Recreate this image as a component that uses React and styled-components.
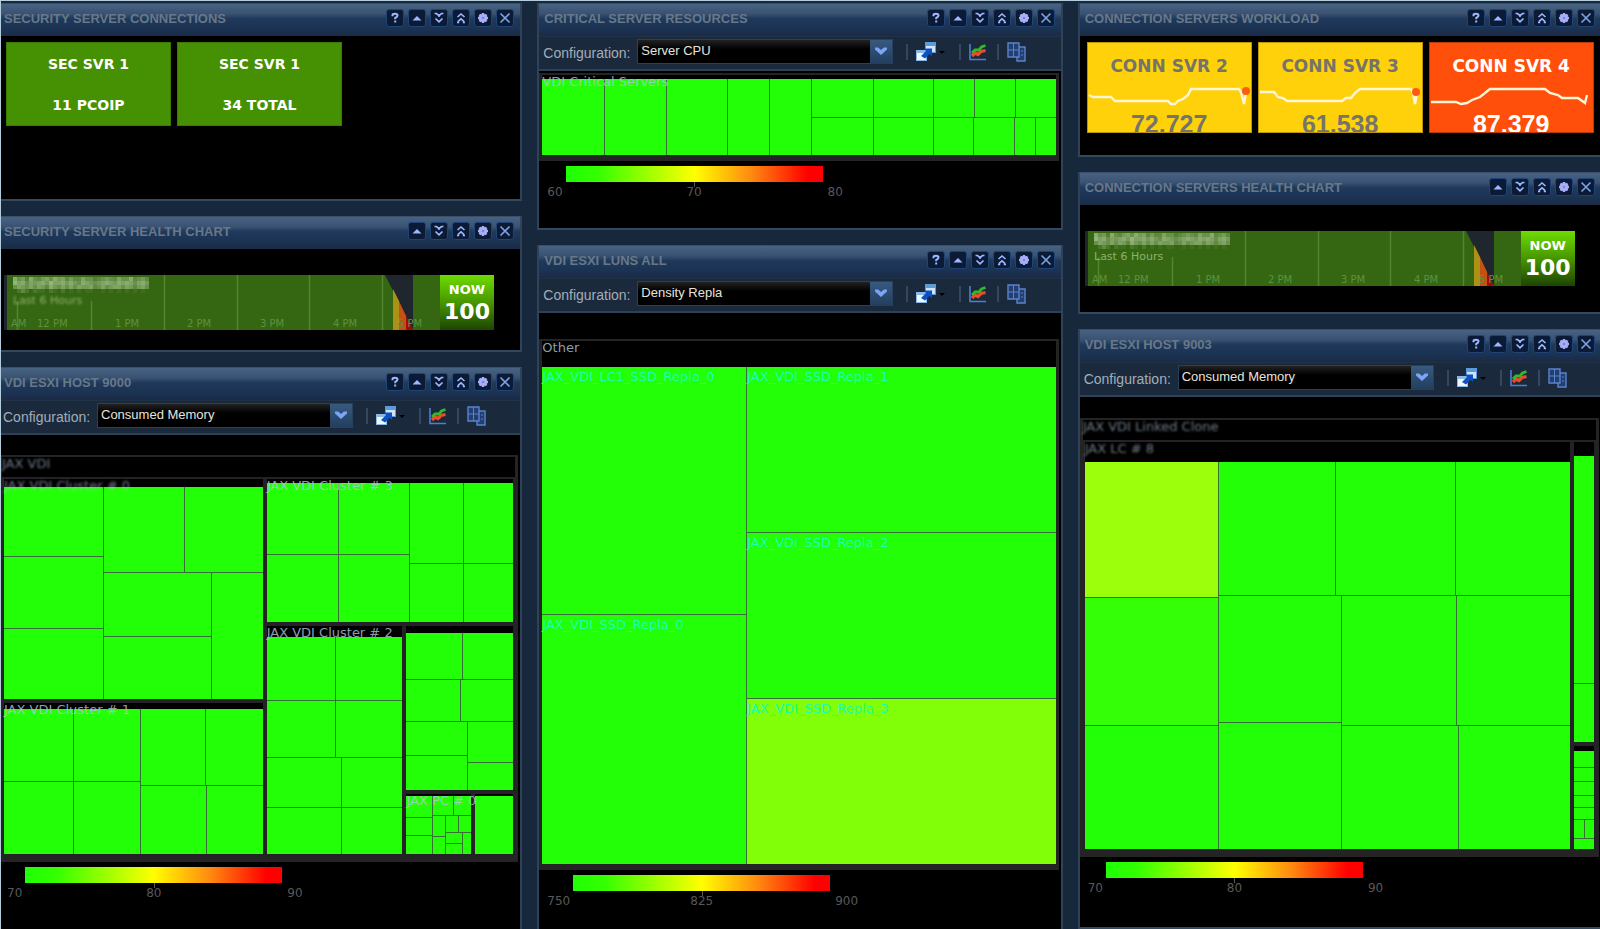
import { useId } from 'react'
import styled, { createGlobalStyle } from 'styled-components'

const GREEN = '#22ff06'

const GlobalStyle = createGlobalStyle`
  *{
    box-sizing: border-box;
  }
  body{
    margin: 0;
    background-color: #17283c;
    font-family: "Liberation Sans", Arial, sans-serif;
  }
`
const Page = styled.main`
  min-height: 100vh;
  overflow: hidden;
  display: flex;
  border-top: 1px solid #b4cddd;
  border-left: 1px solid #b4cddd;
  background-color: #17283c;
`
const Columns = styled.div`
  flex: 1;
  display: grid;
  grid-template-columns: repeat(3, minmax(0, 1fr));
  gap: 15px;
  margin: 2px -3px 0 -4px;
`
const Column = styled.div`
  display: flex;
  flex-direction: column;
  gap: 15px;
`
const PanelBox = styled.section`
  display: flex;
  flex-direction: column;
  flex: ${(props) => props.$fill ? '1 0 auto' : '0 0 auto'};
  border: 2px solid #2f4358;
  border-top: 1px solid #3b4f66;
  border-bottom: ${(props) => props.$open ? '0' : '2px solid #34495e'};
  background-color: #000;
`
const PanelHeader = styled.header`
  display: flex;
  align-items: center;
  justify-content: space-between;
  height: 32px;
  padding: 0 6px 4px 5px;
  background: linear-gradient(#486283 0%, #3a5373 30%, #1f395b 46%, #1c3353 75%, #1a2b45 100%);
`
const PanelTitle = styled.h2`
  margin: 0;
  font-size: 13px;
  font-weight: bold;
  color: #687888;
  white-space: nowrap;
`
const HeaderButtons = styled.div`
  display: flex;
  gap: 4px;
`
const HeaderButton = styled.button`
  display: flex;
  align-items: center;
  justify-content: center;
  width: 18px;
  height: 18px;
  padding: 0;
  border: 1px solid #1e4478;
  border-radius: 3px;
  background-color: #0b1a35;
  color: #9db8ff;
`
const Toolbar = styled.div`
  display: flex;
  align-items: center;
  height: 35px;
  padding: 0 4px 3px;
  border-top: 1px solid #203246;
  border-bottom: 2px solid #2e4256;
  background-color: #1a2a3c;
`
const ConfigLabel = styled.label`
  width: 94px;
  padding-top: 3px;
  font-size: 14px;
  color: #a3adb8;
`
const SelectWrapper = styled.div`
  position: relative;
  flex: 0 1 256px;
  margin-bottom: 1px;
`
const Select = styled.select`
  appearance: none;
  display: block;
  width: 100%;
  height: 25px;
  padding: 0 24px 1px 3px;
  border: 1px solid #24415f;
  border-radius: 0;
  background: linear-gradient(#222 0, #000 40%);
  color: #e8e4dc;
  font-family: inherit;
  font-size: 13px;
`
const SelectArrow = styled.span`
  position: absolute;
  top: 1px;
  right: 1px;
  bottom: 1px;
  width: 22px;
  display: flex;
  align-items: center;
  justify-content: center;
  background: linear-gradient(#38597f, #233f60);
  pointer-events: none;
`
const Separator = styled.span`
  width: 2px;
  height: 16px;
  margin: 0 8px 0 ${(props) => props.$wide ? 13 : 10}px;
  background-color: #33485e;
`
const ToolButton = styled.button`
  display: flex;
  align-items: center;
  padding: 0;
  border: 0;
  background: none;
`
const TileArea = styled.div`
  display: flex;
  gap: 6px;
  min-height: ${(props) => props.$height}px;
  padding: 6px 7px;
  align-items: flex-start;
`
const Tile = styled.div`
  width: 165px;
  height: 84px;
  display: flex;
  flex-direction: column;
  align-items: center;
  justify-content: space-around;
  border: 1px solid #3b7a03;
  background-color: #459003;
  color: #fff;
  font: bold 14px "DejaVu Sans", Verdana, sans-serif;
`
const WorkTile = styled.div`
  width: 165px;
  height: 91px;
  overflow: hidden;
  display: flex;
  flex-direction: column;
  align-items: center;
  background-color: ${(props) => props.$alert ? '#ff4f0a' : '#ffd10a'};
  border: 1px solid ${(props) => props.$alert ? '#b83a08' : '#b89708'};
  color: ${(props) => props.$alert ? '#fff' : '#75746a'};
`
const WorkName = styled.div`
  padding-top: 12px;
  font: bold 17px/22px "DejaVu Sans", Verdana, sans-serif;
`
const WorkValue = styled.div`
  font-size: 25px;
  font-weight: bold;
  line-height: 22px;
`
const Spark = styled.svg`
  flex: none;
  display: block;
`
const HealthArea = styled.div`
  display: flex;
  min-height: ${(props) => props.$height}px;
  padding: 26px 5px 18px;
`
const HealthSvg = styled.svg`
  display: block;
  flex: none;
`
const Now = styled.div`
  width: 54px;
  height: 55px;
  display: flex;
  flex-direction: column;
  align-items: center;
  justify-content: center;
  background: linear-gradient(#6edb00, #4c9d00 45%, #1d4500);
  color: #fff;
  font-family: "DejaVu Sans", Verdana, sans-serif;
  font-weight: bold;
`
const NowLabel = styled.span`
  font-size: 13px;
  line-height: 18px;
`
const NowValue = styled.span`
  font-size: 22px;
  line-height: 26px;
`
const MapArea = styled.div`
  flex: 1 0 ${(props) => props.$height}px;
  display: flex;
  padding: ${(props) => props.$top}px 2px 0 0;
`
const MapFrame = styled.div`
  flex: 1;
  display: flex;
  flex-direction: column;
  border: solid #242424;
  border-width: 2px 3px 6px;
  min-width: 0;
`
const Group = styled.div`
  flex: ${(props) => props.$size} 1 0;
  display: flex;
  flex-direction: column;
  min-width: 0;
  min-height: 0;
  border: 2px solid #242226;
`
const GroupHead = styled.div`
  position: relative;
  z-index: 1;
  flex: none;
  height: ${(props) => props.$height}px;
  font: 13px/14px "DejaVu Sans", Verdana, sans-serif;
  color: rgba(178, 200, 218, ${(props) => props.$blurred ? 0.6 : 0.8});
  white-space: nowrap;
  filter: ${(props) => props.$blurred ? 'blur(1px)' : 'none'};
`
const Split = styled.div`
  flex: ${(props) => props.$size} 1 0;
  display: flex;
  flex-direction: ${(props) => props.$dir};
  gap: ${(props) => props.$plain ? 0 : 1}px;
  min-width: 0;
  min-height: 0;
  background-color: ${(props) => props.$plain ? '#000' : '#397039'};
`
const Cell = styled.div`
  flex: ${(props) => props.$size} 1 0;
  min-width: 0;
  min-height: 0;
  background-color: ${(props) => props.$color || GREEN};
  color: #1affb4;
  font: 13px/20px "DejaVu Sans", Verdana, sans-serif;
  white-space: nowrap;
`
const ScaleArea = styled.div`
  display: grid;
  grid-template-columns: auto 257px auto;
  grid-template-rows: 16px 18px;
  justify-content: start;
  min-height: ${(props) => props.$height}px;
  padding: 5px 0 0 8px;
  font: 12px/20px "DejaVu Sans", Verdana, sans-serif;
  color: #585858;
`
const ScaleBar = styled.div`
  grid-area: 1 / 2;
  background: linear-gradient(to right, #1fff06, #3f0 12%, #ff0 50%, #ff8a10 72%, #f00 94%);
`
const ScaleLow = styled.span`
  grid-area: 2 / 1;
  margin-right: 3px;
`
const ScaleMid = styled.span`
  grid-area: 2 / 2;
  justify-self: center;
  position: relative;
  &::before{
    content: '';
    position: absolute;
    left: 50%;
    top: 0;
    width: 1px;
    height: 5px;
    background-color: #585858;
  }
`
const ScaleHigh = styled.span`
  grid-area: 2 / 3;
  margin-left: 5px;
`

const glyphs = {
  help: (
    <path d="M3.5 4.2V3.2Q3.5 1.8 6 1.8T8.5 3.6Q8.5 4.8 6.2 6V7.2M6.2 8.6V10.6" fill="none" stroke="currentColor" strokeWidth="2" />
  ),
  up: <path d="M1.5 8.5H10.5L6 4Z" fill="currentColor" />,
  down2: (
    <path d="M1.5 1.5H3.5L6 3.6L8.5 1.5H10.5M2.5 6.5L6 9.8L9.5 6.5M6 3.6V5" fill="none" stroke="currentColor" strokeWidth="1.7" />
  ),
  up2: (
    <path d="M2.5 5L6 2L9.5 5M2 10.5H3.4V9.2L6 6.8L8.6 9.2V10.5H10" fill="none" stroke="currentColor" strokeWidth="1.6" />
  ),
  gear: (
    <>
      <path d="M6 1V11M1 6H11M2.5 2.5L9.5 9.5M9.5 2.5L2.5 9.5" stroke="#a9b0f8" strokeWidth="2.4" />
      <circle cx="6" cy="6" r="4.1" fill="#a9b0f8" />
      <circle cx="6" cy="6" r="1.3" fill="#7288d8" />
    </>
  ),
  close: <path d="M1.5 1.5L10.5 10.5M10.5 1.5L1.5 10.5" stroke="#7da0e0" strokeWidth="1.7" />,
}

const buttonNames = {
  help: 'Help',
  up: 'Collapse',
  down2: 'Move down',
  up2: 'Move up',
  gear: 'Edit widget',
  close: 'Close',
}

function Panel({ title, help, fill, open, children }) {
  const names = Object.keys(glyphs).filter((name) => help || name !== 'help')
  return (
    <PanelBox $fill={fill} $open={open}>
      <PanelHeader>
        <PanelTitle>{title}</PanelTitle>
        <HeaderButtons>
          {names.map((name) => (
            <HeaderButton key={name} type="button" aria-label={buttonNames[name]}>
              <svg width="12" height="12" viewBox="0 0 12 12">{glyphs[name]}</svg>
            </HeaderButton>
          ))}
        </HeaderButtons>
      </PanelHeader>
      {children}
    </PanelBox>
  )
}

function ConfigBar({ value }) {
  const id = useId()
  return (
    <Toolbar>
      <ConfigLabel htmlFor={id}>Configuration:</ConfigLabel>
      <SelectWrapper>
        <Select id={id} defaultValue={value}>
          <option>{value}</option>
        </Select>
        <SelectArrow>
          <svg width="12" height="10" viewBox="0 0 12 10">
            <path d="M0 1.5H3.2L6 4L8.8 1.5H12V3.5L6 9L0 3.5Z" fill="#7ba5f5" />
          </svg>
        </SelectArrow>
      </SelectWrapper>
      <Separator $wide />
      <ToolButton type="button" aria-label="Open view">
        <svg width="30" height="20" viewBox="0 0 30 20">
          <path d="M9 0H20V11H9Z" fill="#5d9ad8" />
          <path d="M10 4H19V10H10Z" fill="#cfe4f8" />
          <path d="M0 8H11V19H0Z" fill="#8ab8e4" />
          <path d="M1 11H10V18H1Z" fill="#eef7ff" />
          <path d="M5 14L10 9L8 6.5H16V14L13.5 12L9 16.5Z" fill="#0c50c4" />
          <path d="M23 9H29L26 12Z" fill="#000" />
        </svg>
      </ToolButton>
      <Separator $wide />
      <ToolButton type="button" aria-label="Show chart">
        <svg width="18" height="18" viewBox="0 0 18 18">
          <path d="M1 1V16.5H17" fill="none" stroke="#4d7fd0" strokeWidth="1.6" />
          <path d="M3 13L6 10L9 11.5L12 8.5L16.5 7.5" fill="none" stroke="#f04a28" strokeWidth="3.2" />
          <path d="M3 10L6 7L10 7L12.5 4L16.5 2.5" fill="none" stroke="#33b82c" strokeWidth="2.8" />
        </svg>
      </ToolButton>
      <Separator />
      <ToolButton type="button" aria-label="Compare">
        <svg width="20" height="20" viewBox="0 0 20 20">
          <g fill="#223f70" stroke="#5b83cc" strokeWidth="1.4">
            <path d="M10 5H18V19H10Z" />
            <path d="M1 1H12V15H1Z" />
            <path d="M1 8H12M6.5 1V15M14 9H16M14 13H16" fill="none" strokeWidth="1" />
          </g>
        </svg>
      </ToolButton>
    </Toolbar>
  )
}

function Scale({ low, mid, high, height }) {
  return (
    <ScaleArea $height={height}>
      <ScaleBar />
      <ScaleLow>{low}</ScaleLow>
      <ScaleMid>{mid}</ScaleMid>
      <ScaleHigh>{high}</ScaleHigh>
    </ScaleArea>
  )
}

// A treemap is a tree of splits; a plain number is a green cell of that weight
const row = (size, ...kids) => ({ size, dir: 'row', kids })
const col = (size, ...kids) => ({ size, dir: 'column', kids })
const plain = (node) => ({ ...node, plain: true })
const group = (size, head, label, body, blurred) => ({ size, head, label, body, blurred })

function MapNode({ node }) {
  if (typeof node === 'number') return <Cell $size={node} />
  if (node.kids) {
    return (
      <Split $size={node.size} $dir={node.dir} $plain={node.plain}>
        {node.kids.map((kid, i) => <MapNode key={i} node={kid} />)}
      </Split>
    )
  }
  if (node.body) {
    return (
      <Group $size={node.size}>
        <GroupHead $height={node.head} $blurred={node.blurred}>{node.label}</GroupHead>
        <MapNode node={node.body} />
      </Group>
    )
  }
  return <Cell $size={node.size} $color={node.color}>{node.label}</Cell>
}

function Treemap({ top, height, head, label, blurred, root }) {
  return (
    <MapArea $top={top} $height={height}>
      <MapFrame>
        <GroupHead $height={head} $blurred={blurred}>{label}</GroupHead>
        <MapNode node={root} />
      </MapFrame>
    </MapArea>
  )
}

const criticalServers = row(1,
  180, 176, 176, 119, 119,
  col(708,
    row(38, 182, 176, 119, 119, 118),
    row(38, 182, 176, 119, 119, 58, 60),
  ),
)

const luns = row(1,
  col(203,
    { size: 248, label: 'JAX_VDI_LC1_SSD_Repla_0' },
    { size: 250, label: 'JAX_VDI_SSD_Repla_0' },
  ),
  col(307,
    { size: 166, label: 'JAX_VDI_SSD_Repla_1' },
    { size: 166, label: 'JAX_VDI_SSD_Repla_2' },
    { size: 166, label: 'JAX_VDI_SSD_Repla_3', color: '#80ff08' },
  ),
)

const host9000 = plain(row(1,
  plain(col(262,
    group(225, 8, 'JAX VDI Cluster # 0', row(1,
      col(98, 69, 71, 70),
      col(158,
        row(85, 80, 78),
        row(127, col(107, 64, 63), 51),
      ),
    ), true),
    group(154, 6, 'JAX VDI Cluster # 1', row(1,
      col(135, row(71, 69, 66), row(71, 69, 66)),
      col(121, row(75, 64, 57), row(67, 65, 56)),
    )),
  )),
  plain(col(250,
    group(145, 4, 'JAX VDI Cluster # 3', row(1,
      col(141, row(71, 71, 70), row(67, 71, 70)),
      col(103, row(80, 54, 49), row(58, 54, 49)),
    )),
    plain(row(234,
      group(137, 11, 'JAX VDI Cluster # 2', col(1,
        row(63, 67, 66),
        row(57, 67, 66),
        row(49, 73, 60),
        row(47, 73, 60),
      )),
      plain(col(112,
        group(167, 7, '', col(1,
          row(46, 56, 51),
          row(42, 54, 53),
          row(68, col(61, 34, 34), col(46, 41, 27)),
        )),
        plain(row(66,
          group(70, 2, 'JAX PC # 0', row(1,
            col(28, 22, 18, 18),
            col(40,
              row(20, 21, 19),
              row(38,
                col(13, 20, 18),
                col(27,
                  row(16, 13, 14),
                  row(22, col(18, 11, 11), 9),
                ),
              ),
            ),
          )),
          group(42, 2, '', row(1, 1)),
        )),
      )),
    )),
  )),
))

const host9003 = plain(row(1,
  group(488, 20, 'JAX LC # 8', row(1,
    col(133, { size: 135, color: '#9cff0c' }, { size: 128, color: '#35ff06' }, 123),
    col(351,
      row(133, 117, 119, 115),
      row(253,
        col(122, 126, 127),
        col(229, row(130, 115, 114), row(123, 117, 112)),
      ),
    ),
  ), true),
  plain(col(24,
    group(304, 14, '', col(1, 228, 58)),
    group(105, 5, '', col(1, 17, 14, 13, 12, 11, row(19, 1, 1), 10)),
  )),
))

const workload = [
  {
    name: 'CONN SVR 2',
    value: '72.727',
    points: '1,18 5,20 23,20 27,24 80,24 83,27 87,27 90,24 95,22 100,18 103,12 151,12 153,15 156,27 158,16',
    dot: [158, 14],
  },
  {
    name: 'CONN SVR 3',
    value: '61.538',
    points: '1,15 15,15 19,20 24,21 28,24 83,24 87,21 92,21 96,16 101,12 152,12 154,16 156,27 158,16',
    dot: [157, 15],
  },
  {
    name: 'CONN SVR 4',
    value: '87.379',
    alert: true,
    points: '1,25 26,25 31,27 37,26 42,23 50,20 60,12 115,12 120,16 128,18 132,21 148,21 155,26 157,18',
  },
]

const hours = [
  [33, '12 PM'],
  [111, '1 PM'],
  [183, '2 PM'],
  [256, '3 PM'],
  [329, '4 PM'],
  [394, '5 PM'],
]

// opacity steps of the masked host name, one digit per 4px block
const maskRows = [
  '8563854675867464475534565475584564',
  '9785767869778686587656787687875786',
  '5765757648657575766745756775764675',
  '0242021102102010101100101010101010',
]

function HealthChart({ maskedRange }) {
  return (
    <>
      <HealthSvg width="436" height="55" viewBox="0 0 436 55" role="img" aria-label="Health over the last 6 hours">
        <rect width="436" height="55" fill="#356612" />
        <rect width="3" height="55" fill="#20262e" />
        <path d="M13.5 26V55M87.5 26V55M160.5 0V55M233.5 0V55M305.5 0V55M378.5 0V55" stroke="#55852f" strokeWidth="1.5" />
        <path d="M381 0H409V55Z" fill="#20262e" />
        <path d="M389 14L395 26V55H389Z" fill="#ac9017" />
        <path d="M395 26L402 41V55H395Z" fill="#c45212" />
        <path d="M402 41L409 55H402Z" fill="#a8080c" />
        <g fontFamily="DejaVu Sans, Verdana, sans-serif" fontSize="10" fill="#5f9140">
          <text x="7" y="52">AM</text>
          {hours.map(([x, text]) => <text key={text} x={x} y="52">{text}</text>)}
        </g>
        {maskRows.map((line, y) => [...line].map((step, x) => (
          <rect key={x + '-' + y} x={9 + x * 4} y={2 + y * 4} width="4" height="4" fill="#b4cf9c" opacity={step / 12} />
        )))}
        <text
          x="9"
          y="29"
          fontFamily="DejaVu Sans, Verdana, sans-serif"
          fontSize="11"
          fill="#8db26e"
          style={maskedRange ? { filter: 'blur(1px)' } : undefined}
        >
          Last 6 Hours
        </text>
      </HealthSvg>
      <Now>
        <NowLabel>NOW</NowLabel>
        <NowValue>100</NowValue>
      </Now>
    </>
  )
}

function App() {
  return (
    <Page>
      <GlobalStyle />
      <Columns>
        <Column>
          <Panel title="SECURITY SERVER CONNECTIONS" help>
            <TileArea $height={163}>
              <Tile><span>SEC SVR 1</span><span>11 PCOIP</span></Tile>
              <Tile><span>SEC SVR 1</span><span>34 TOTAL</span></Tile>
            </TileArea>
          </Panel>
          <Panel title="SECURITY SERVER HEALTH CHART">
            <HealthArea $height={101}>
              <HealthChart maskedRange />
            </HealthArea>
          </Panel>
          <Panel title="VDI ESXI HOST 9000" help fill open>
            <ConfigBar value="Consumed Memory" />
            <Treemap top={20} height={360} head={20} label="JAX VDI" blurred root={host9000} />
            <Scale low="70" mid="80" high="90" height={67} />
          </Panel>
        </Column>

        <Column>
          <Panel title="CRITICAL SERVER RESOURCES" help>
            <ConfigBar value="Server CPU" />
            <Treemap top={2} height={90} head={4} label="VDI Critical Servers" root={criticalServers} />
            <Scale low="60" mid="70" high="80" height={67} />
          </Panel>
          <Panel title="VDI ESXI LUNS ALL" help fill open>
            <ConfigBar value="Density Repla" />
            <Treemap top={26} height={360} head={26} label="Other" root={luns} />
            <Scale low="750" mid="825" high="900" height={59} />
          </Panel>
        </Column>

        <Column>
          <Panel title="CONNECTION SERVERS WORKLOAD" help>
            <TileArea $height={119}>
              {workload.map((item) => (
                <WorkTile key={item.name} $alert={item.alert}>
                  <WorkName>{item.name}</WorkName>
                  <Spark width="163" height="36" viewBox="0 0 163 36">
                    <polyline points={item.points} fill="none" stroke="#fff6d8" strokeWidth="2.4" />
                    {item.dot && <circle cx={item.dot[0]} cy={item.dot[1]} r="4" fill="#ff5a10" />}
                  </Spark>
                  <WorkValue>{item.value}</WorkValue>
                </WorkTile>
              ))}
            </TileArea>
          </Panel>
          <Panel title="CONNECTION SERVERS HEALTH CHART">
            <HealthArea $height={107}>
              <HealthChart />
            </HealthArea>
          </Panel>
          <Panel title="VDI ESXI HOST 9003" help fill>
            <ConfigBar value="Consumed Memory" />
            <Treemap top={21} height={360} head={20} label="JAX VDI Linked Clone" blurred root={host9003} />
            <Scale low="70" mid="80" high="90" height={70} />
          </Panel>
        </Column>
      </Columns>
    </Page>
  )
}

export default App
